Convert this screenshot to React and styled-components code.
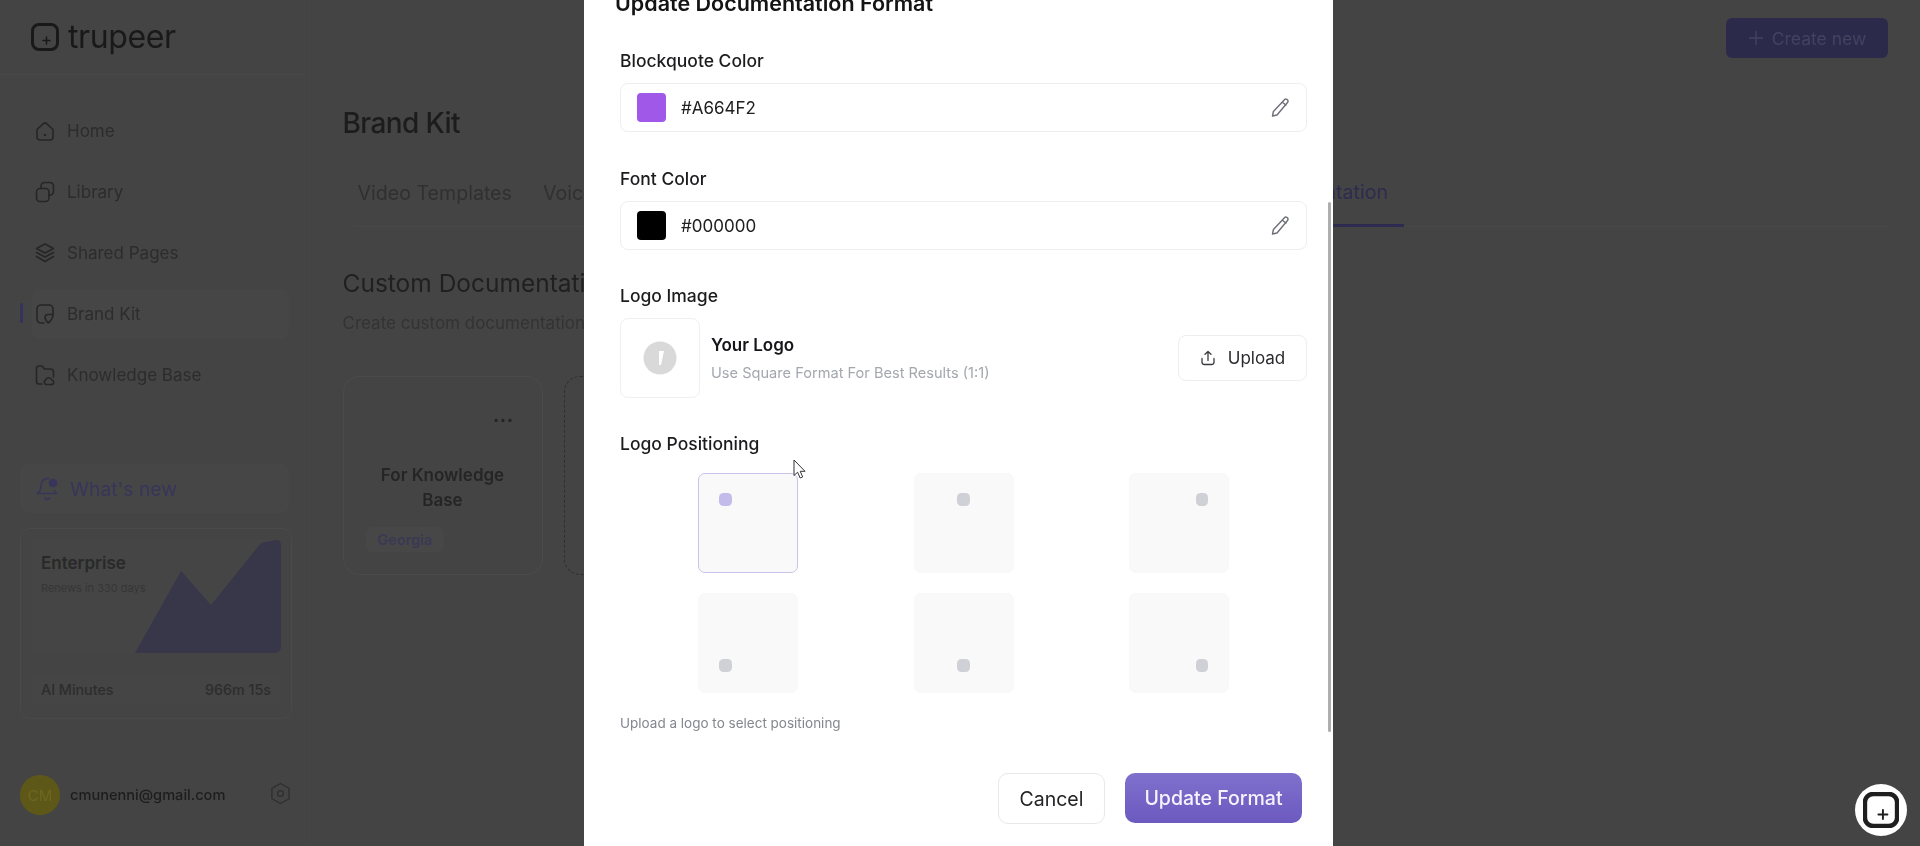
import React from "react";
import styled, { createGlobalStyle } from "styled-components";

const Global = createGlobalStyle`
  html, body { margin: 0; padding: 0; width: 1920px; height: 846px; overflow: hidden; background: #444444; }
  * { box-sizing: border-box; }
  #root { width: 1920px; height: 846px; font-family: Inter, "Liberation Sans", sans-serif; }
`;

const Stage = styled.div`
  position: relative;
  width: 1920px;
  height: 846px;
  overflow: hidden;
  background: #444444;
`;
const Shell = styled.div`
  display: flex;
  width: 100%;
  height: 100%;
  filter: blur(0.7px);
`;
const Sidebar = styled.aside`
  width: 310px;
  flex: none;
  height: 100%;
  border-right: 1px solid #464646;
  display: flex;
  flex-direction: column;
`;
const Brand = styled.div`
  height: 75px;
  width: 305px;
  flex: none;
  border-bottom: 1px solid #484848;
  display: flex;
  align-items: center;
  gap: 9px;
  padding: 0 0 0 31px;
`;
const BrandName = styled.span`
  font-size: 32px;
  line-height: 36px;
  font-weight: 400;
  letter-spacing: -0.4px;
  color: #191919;
  margin-top: -1px;
`;
const Nav = styled.nav`
  display: flex;
  flex-direction: column;
  gap: 11px;
  margin: 31px 20px 0 32px;
`;
const NavItem = styled.div`
  position: relative;
  height: 50px;
  display: flex;
  align-items: center;
  gap: 12px;
  padding-left: 3px;
  border-radius: 8px;
  background: ${(p) => (p.$active ? "#464646" : "transparent")};
  font-size: 17px;
  color: #2c2c2c;
  ${(p) =>
    p.$active &&
    `&::before { content: ""; position: absolute; left: -12px; top: 14px; width: 3px; height: 20px; background: #35335a; border-radius: 2px; }`}
`;
const NavIcon = styled.svg`
  width: 20px;
  height: 22px;
  flex: none;
  fill: none;
  stroke: #262626;
  stroke-width: 1.6;
  stroke-linecap: round;
  stroke-linejoin: round;
`;
const WhatsNew = styled.div`
  margin: 64px 20px 0 20px;
  height: 49px;
  border-radius: 8px;
  background: #464646;
  display: flex;
  align-items: center;
  gap: 10px;
  padding-left: 16px;
  font-size: 19.3px;
  color: #37355a;
`;
const PlanCard = styled.div`
  position: relative;
  margin: 15px 17px 0 20px;
  height: 191px;
  border: 1px solid #4a4a4a;
  border-radius: 10px;
  padding: 10px;
  display: flex;
  flex-direction: column;
`;
const PlanTop = styled.div`
  position: relative;
  height: 114px;
  border-radius: 6px;
  background: #454545;
  padding: 14px 10px;
  overflow: hidden;
`;
const PlanChart = styled.svg`
  position: absolute;
  right: 0;
  top: 0;
  width: 146px;
  height: 114px;
`;
const PlanName = styled.div`
  position: relative;
  font-size: 17px;
  line-height: 20px;
  font-weight: 600;
  color: #292929;
`;
const PlanRenew = styled.div`
  position: relative;
  margin-top: 8px;
  font-size: 11px;
  line-height: 14px;
  color: #363636;
`;
const PlanRow = styled.div`
  margin-top: 21px;
  height: 31px;
  display: flex;
  align-items: center;
  justify-content: space-between;
  background: #454545;
  border-radius: 6px;
  padding: 0 10px;
  font-size: 14.3px;
  font-weight: 500;
  color: #2d2d2d;
`;
const UserRow = styled.div`
  margin: 56px 18px 0 20px;
  display: flex;
  align-items: center;
  gap: 10px;
`;
const Avatar = styled.div`
  width: 40px;
  height: 40px;
  border-radius: 50%;
  flex: none;
  background: #5e5818;
  color: #6e6720;
  font-size: 15px;
  display: flex;
  align-items: center;
  justify-content: center;
`;
const Email = styled.div`
  flex: 1;
  font-size: 14.6px;
  font-weight: 500;
  color: #1d1d1d;
`;
const HexSlot = styled.span`
  display: flex;
  margin-bottom: 4px;
`;
const Main = styled.main`
  flex: 1;
  min-width: 0;
  padding: 18px 32px 0 32.5px;
`;
const TopBar = styled.div`
  display: flex;
  justify-content: flex-end;
`;
const CreateButton = styled.div`
  width: 162px;
  height: 40px;
  border-radius: 6px;
  background: #2b2a4a;
  color: #44425f;
  font-size: 17.5px;
  display: flex;
  align-items: center;
  justify-content: center;
  gap: 8px;
`;
const PageTitle = styled.h1`
  margin: 47px 0 0;
  font-size: 28px;
  line-height: 36px;
  font-weight: 500;
  letter-spacing: -0.6px;
  color: #1c1c1c;
`;
const Tabs = styled.div`
  display: flex;
  margin: 34px 0 0 10px;
  height: 52px;
  width: 1535px;
  border-bottom: 1px solid #484848;
`;
const TabGroup = styled.div`
  display: flex;
  width: 1051.5px;
`;
const Tab = styled.div`
  height: 52px;
  padding: 0 5px;
  margin-left: ${(p) => (p.$active ? "auto" : "0")};
  padding-right: ${(p) => (p.$active ? "16px" : "5px")};
  margin-right: ${(p) => (p.$active ? "0" : "21px")};
  display: flex;
  align-items: center;
  padding-bottom: 16px;
  font-size: 19.6px;
  color: ${(p) => (p.$active ? "#2e2b50" : "#303030")};
  border-bottom: ${(p) => (p.$active ? "3px solid #2e2b50" : "0")};
`;
const SectionTitle = styled.h2`
  margin: 40px 0 0;
  font-size: 24.5px;
  line-height: 32px;
  font-weight: 400;
  color: #202020;
`;
const SectionSub = styled.p`
  margin: 13px 0 0;
  font-size: 17px;
  line-height: 22px;
  color: #333333;
`;
const Cards = styled.div`
  display: flex;
  gap: 21px;
  margin-top: 42px;
`;
const DocCard = styled.div`
  width: 200px;
  height: 199px;
  border-radius: 16px;
  border: 1px solid #4b4b4b;
  padding: 25px 22px 0;
  display: flex;
  flex-direction: column;
`;
const AddCard = styled(DocCard)`
  border: 1px dashed #2f2f2f;
`;
const Dots = styled.div`
  align-self: flex-end;
  margin-right: 6px;
  height: 28px;
  font-size: 18px;
  font-weight: 800;
  line-height: 28px;
  letter-spacing: 0.5px;
  color: #252525;
`;
const CardTitle = styled.div`
  margin-top: 33px;
  font-size: 17px;
  line-height: 25px;
  font-weight: 600;
  text-align: center;
  color: #252525;
`;
const CardTag = styled.div`
  align-self: flex-start;
  margin-top: 14px;
  height: 25px;
  padding: 0 12px;
  border-radius: 6px;
  background: #474747;
  font-size: 14.5px;
  font-weight: 600;
  line-height: 25px;
  color: #3a3955;
`;
const Backdrop = styled.div`
  position: absolute;
  inset: 0;
  display: flex;
  justify-content: center;
`;
const Modal = styled.div`
  position: relative;
  width: 749px;
  height: 846px;
  margin-right: 3px;
  background: #ffffff;
  overflow: hidden;
  padding: 0 26px 0 36px;
  filter: blur(0.25px);
`;
const ModalTitle = styled.h3`
  margin: -11px 0 0 -5px;
  font-size: 21.5px;
  line-height: 28px;
  font-weight: 600;
  color: #141414;
`;
const FieldLabel = styled.div`
  font-size: 17.5px;
  line-height: 24px;
  font-weight: 500;
  color: #1c1c1e;
  margin-top: ${(p) => p.$top}px;
`;
const ColorField = styled.div`
  margin-top: 10px;
  height: 49px;
  border: 1px solid #eeeeef;
  border-radius: 8px;
  display: flex;
  align-items: center;
  padding: 0 16px 0 16px;
`;
const Swatch = styled.span`
  width: 29px;
  height: 29px;
  border-radius: 4px;
  background: ${(p) => p.$color};
  flex: none;
`;
const ColorValue = styled.span`
  margin-left: 15px;
  flex: 1;
  font-size: 17px;
  color: #202022;
`;
const PencilWrap = styled.span`
  display: flex;
  color: #6d6f76;
`;
const LogoRow = styled.div`
  display: flex;
  align-items: center;
  margin-top: 10px;
`;
const LogoBox = styled.div`
  width: 80px;
  height: 80px;
  border: 1px solid #f0f0f1;
  border-radius: 8px;
  display: flex;
  align-items: center;
  justify-content: center;
  flex: none;
`;
const LogoText = styled.div`
  margin-left: 11px;
  flex: 1;
`;
const LogoName = styled.div`
  font-size: 17px;
  line-height: 24px;
  font-weight: 600;
  color: #15151a;
  margin-top: -1px;
`;
const LogoHint = styled.div`
  margin-top: 6px;
  font-size: 14.6px;
  line-height: 20px;
  color: #a3a7ae;
`;
const UploadButton = styled.div`
  width: 129px;
  height: 46px;
  border: 1px solid #eeeeef;
  border-radius: 8px;
  display: flex;
  align-items: center;
  justify-content: center;
  gap: 12px;
  font-size: 17px;
  color: #2a2a2e;
`;
const PositionGrid = styled.div`
  display: grid;
  grid-template-columns: repeat(3, 215.5px);
  justify-content: center;
  justify-items: center;
  row-gap: 20px;
  margin-top: 17px;
`;
const PositionTile = styled.div`
  width: 100px;
  height: 100px;
  border-radius: 7px;
  background: #f9f9fa;
  border: 1px solid ${(p) => (p.$selected ? "#c9c3ec" : "#f8f8f9")};
  padding: ${(p) => (p.$v === "flex-start" ? "19px" : "20px")} 20px 20px;
  display: flex;
  justify-content: ${(p) => p.$h};
  align-items: ${(p) => p.$v};
`;
const PositionDot = styled.span`
  width: 12.5px;
  height: 13px;
  border-radius: 4.5px;
  background: ${(p) => (p.$selected ? "#c3bbea" : "#cfd1d6")};
`;
const PositionHint = styled.div`
  margin-top: 20px;
  font-size: 13.5px;
  line-height: 20px;
  color: #84878f;
`;
const Footer = styled.div`
  display: flex;
  justify-content: flex-end;
  gap: 20px;
  margin-top: 40px;
  padding-right: 5px;
`;
const CancelButton = styled.div`
  width: 107px;
  height: 51px;
  border: 1px solid #e8e8ea;
  border-radius: 10px;
  display: flex;
  align-items: center;
  justify-content: center;
  font-size: 19.5px;
  color: #232326;
`;
const PrimaryButton = styled.div`
  width: 177px;
  height: 50px;
  border-radius: 10px;
  background: linear-gradient(180deg, #7f70cd 0%, #6c5abf 100%);
  display: flex;
  align-items: center;
  justify-content: center;
  font-size: 19.5px;
  font-weight: 500;
  color: #f5f3fc;
`;
const ScrollThumb = styled.div`
  position: absolute;
  right: 2px;
  top: 202px;
  width: 3px;
  height: 530px;
  background: #aeaeae;
  border-radius: 2px;
`;
const FloatButton = styled.div`
  position: absolute;
  left: 1855px;
  top: 784px;
  width: 52px;
  height: 52px;
  border-radius: 50%;
  background: #ffffff;
  display: flex;
  align-items: center;
  justify-content: center;
`;
const Cursor = styled.svg`
  position: absolute;
  left: 793px;
  top: 459px;
  width: 14px;
  height: 21px;
`;

const LogoMark = ({ size, stroke, color }) => (
  <svg width={size} height={size} viewBox="0 0 28 28" fill="none" stroke={color} strokeLinecap="round">
    <rect x="1.5" y="1.5" width="25" height="25" rx="6.5" strokeWidth={stroke} />
    <path d="M15.5 14v7M12 17.5h7" strokeWidth="1.5" />
  </svg>
);

const HomeIcon = () => (
  <NavIcon viewBox="0 0 20 22">
    <path d="M2 9.5 8.4 3.6a2.4 2.4 0 0 1 3.2 0L18 9.5V17a3 3 0 0 1-3 3H5a3 3 0 0 1-3-3Z" />
    <circle cx="10" cy="15" r="0.5" />
  </NavIcon>
);
const LibraryIcon = () => (
  <NavIcon viewBox="0 0 20 22">
    <rect x="1.5" y="7.5" width="12.5" height="13" rx="3.5" />
    <path d="M6 7V5a3.5 3.5 0 0 1 3.5-3.5h5A3.5 3.5 0 0 1 18.5 5v5.5A3.5 3.5 0 0 1 15 14h-1" />
  </NavIcon>
);
const LayersIcon = () => (
  <NavIcon viewBox="0 0 20 22">
    <path d="M10 2 18.5 6.5 10 11 1.5 6.5Z" />
    <path d="M1.5 10.5 10 15 18.5 10.5" />
    <path d="M1.5 14.5 10 19.5 18.5 14.5" />
  </NavIcon>
);
const StickerIcon = () => (
  <NavIcon viewBox="0 0 20 22">
    <path d="M9 20H6a4 4 0 0 1-4-4V6a4 4 0 0 1 4-4h8a4 4 0 0 1 4 4v5" />
    <path d="M18 11.5h-5a3 3 0 0 0-3 3c0 1.5 1.5 3.5 3 5.5 2-1.5 5-5 5-8.5Z" />
  </NavIcon>
);
const FolderIcon = () => (
  <NavIcon viewBox="0 0 20 22">
    <path d="M7 20H4a2.5 2.5 0 0 1-2.5-2.5v-13A2.5 2.5 0 0 1 4 2h3l2.5 3h6a3 3 0 0 1 3 3v5" />
    <path d="M11 20.5a2.5 2.5 0 0 1-.5-4.5 3.5 3.5 0 0 1 6.5 0 2.5 2.5 0 0 1 .5 4.5Z" />
  </NavIcon>
);
const BellIcon = () => (
  <svg width="24" height="26" viewBox="0 0 24 26" fill="none" stroke="#37355a" strokeWidth="1.6" strokeLinecap="round" strokeLinejoin="round">
    <path d="M13 2.5a7 7 0 0 0-8 7c0 4.5-1.5 6.5-3.5 8h19c-.8-.8-1.500-1.700-2-3" />
    <path d="M9 22a3 3 0 0 0 5 0" />
    <circle cx="17" cy="7" r="3.5" fill="#37355a" />
  </svg>
);
const HexIcon = () => (
  <svg width="21" height="23" viewBox="0 0 22 24" fill="none" stroke="#2f2f2f" strokeWidth="1.4" strokeLinejoin="round">
    <path d="M11 1.5 20 6.5v11L11 22.5 2 17.5v-11Z" />
    <circle cx="11" cy="12" r="3" />
  </svg>
);
const PencilIcon = () => (
  <svg width="20" height="20" viewBox="0 0 20 20" fill="none" stroke="currentColor" strokeWidth="1.4" strokeLinecap="round" strokeLinejoin="round">
    <path d="M14 2.3a2.1 2.1 0 0 1 3.7 2L7 17l-4.5 1 .9-4.5Z" />
    <path d="m12.3 4.3 3.6 2.7" />
  </svg>
);
const UploadIcon = () => (
  <svg width="16" height="16" viewBox="0 0 16 16" fill="none" stroke="#3a3a3e" strokeWidth="1.3" strokeLinecap="round" strokeLinejoin="round">
    <path d="M8 10.5V1.5M5 4.2 8 1.5l3 2.7" />
    <path d="M2 8.5V12a2.5 2.5 0 0 0 2.5 2.5h7A2.5 2.5 0 0 0 14 12V8.5" />
  </svg>
);
const LogoPlaceholder = () => (
  <svg width="34" height="34" viewBox="0 0 34 34">
    <circle cx="17" cy="17" r="16.5" fill="#d9d9d9" />
    <path d="M16 10h5L18 24h-2Z" fill="#ffffff" />
  </svg>
);

const tiles = [
  ["flex-start", "flex-start"],
  ["center", "flex-start"],
  ["flex-end", "flex-start"],
  ["flex-start", "flex-end"],
  ["center", "flex-end"],
  ["flex-end", "flex-end"],
];

const navItems = [
  ["Home", HomeIcon],
  ["Library", LibraryIcon],
  ["Shared Pages", LayersIcon],
  ["Brand Kit", StickerIcon],
  ["Knowledge Base", FolderIcon],
];

export default function App() {
  return (
    <Stage>
      <Global />
      <Shell>
        <Sidebar>
          <Brand>
            <LogoMark size={28} stroke={3} color="#191919" />
            <BrandName>trupeer</BrandName>
          </Brand>
          <Nav>
            {navItems.map(([label, Icon]) => (
              <NavItem key={label} $active={label === "Brand Kit"}>
                <Icon />
                {label}
              </NavItem>
            ))}
          </Nav>
          <WhatsNew>
            <BellIcon />
            What's new
          </WhatsNew>
          <PlanCard>
            <PlanTop>
              <PlanChart viewBox="0 0 146 114" preserveAspectRatio="none">
                <path d="M0 114 46 32 76 66 126 4 146 0V114Z" fill="#383649" />
              </PlanChart>
              <PlanName>Enterprise</PlanName>
              <PlanRenew>Renews in 330 days</PlanRenew>
            </PlanTop>
            <PlanRow>
              <span>AI Minutes</span>
              <span>966m 15s</span>
            </PlanRow>
          </PlanCard>
          <UserRow>
            <Avatar>CM</Avatar>
            <Email>cmunenni@gmail.com</Email>
            <HexSlot><HexIcon /></HexSlot>
          </UserRow>
        </Sidebar>
        <Main>
          <TopBar>
            <CreateButton>
              <svg width="16" height="16" viewBox="0 0 16 16" stroke="#44425f" strokeWidth="1.4">
                <path d="M8 1v14M1 8h14" />
              </svg>
              Create new
            </CreateButton>
          </TopBar>
          <PageTitle>Brand Kit</PageTitle>
          <Tabs>
            <TabGroup>
              <Tab>Video Templates</Tab>
              <Tab>Voice Settings</Tab>
              <Tab $active>Documentation</Tab>
            </TabGroup>
          </Tabs>
          <SectionTitle>Custom Documentation Formats</SectionTitle>
          <SectionSub>Create custom documentation formats for your brand</SectionSub>
          <Cards>
            <DocCard>
              <Dots>...</Dots>
              <CardTitle>For Knowledge Base</CardTitle>
              <CardTag>Georgia</CardTag>
            </DocCard>
            <AddCard />
          </Cards>
        </Main>
      </Shell>
      <Backdrop>
        <Modal>
          <ModalTitle>Update Documentation Format</ModalTitle>
          <FieldLabel $top={32}>Blockquote Color</FieldLabel>
          <ColorField>
            <Swatch $color="#9f58e8" />
            <ColorValue>#A664F2</ColorValue>
            <PencilWrap><PencilIcon /></PencilWrap>
          </ColorField>
          <FieldLabel $top={35}>Font Color</FieldLabel>
          <ColorField>
            <Swatch $color="#000000" />
            <ColorValue>#000000</ColorValue>
            <PencilWrap><PencilIcon /></PencilWrap>
          </ColorField>
          <FieldLabel $top={34}>Logo Image</FieldLabel>
          <LogoRow>
            <LogoBox><LogoPlaceholder /></LogoBox>
            <LogoText>
              <LogoName>Your Logo</LogoName>
              <LogoHint>Use Square Format For Best Results (1:1)</LogoHint>
            </LogoText>
            <UploadButton><UploadIcon />Upload</UploadButton>
          </LogoRow>
          <FieldLabel $top={34}>Logo Positioning</FieldLabel>
          <PositionGrid>
            {tiles.map(([h, v], i) => (
              <PositionTile key={i} $h={h} $v={v} $selected={i === 0}>
                <PositionDot $selected={i === 0} />
              </PositionTile>
            ))}
          </PositionGrid>
          <PositionHint>Upload a logo to select positioning</PositionHint>
          <Footer>
            <CancelButton>Cancel</CancelButton>
            <PrimaryButton>Update Format</PrimaryButton>
          </Footer>
          <ScrollThumb />
        </Modal>
      </Backdrop>
      <FloatButton>
        <LogoMark size={36} stroke={3.5} color="#1f1f1f" />
      </FloatButton>
      <Cursor viewBox="0 0 14 21">
        <path d="M1 1v15.5l3.6-3.3 2.5 5.8 2.6-1.1-2.5-5.600H12Z" fill="#ffffff" stroke="#33333a" strokeWidth="1" strokeLinejoin="round" />
      </Cursor>
    </Stage>
  );
}
